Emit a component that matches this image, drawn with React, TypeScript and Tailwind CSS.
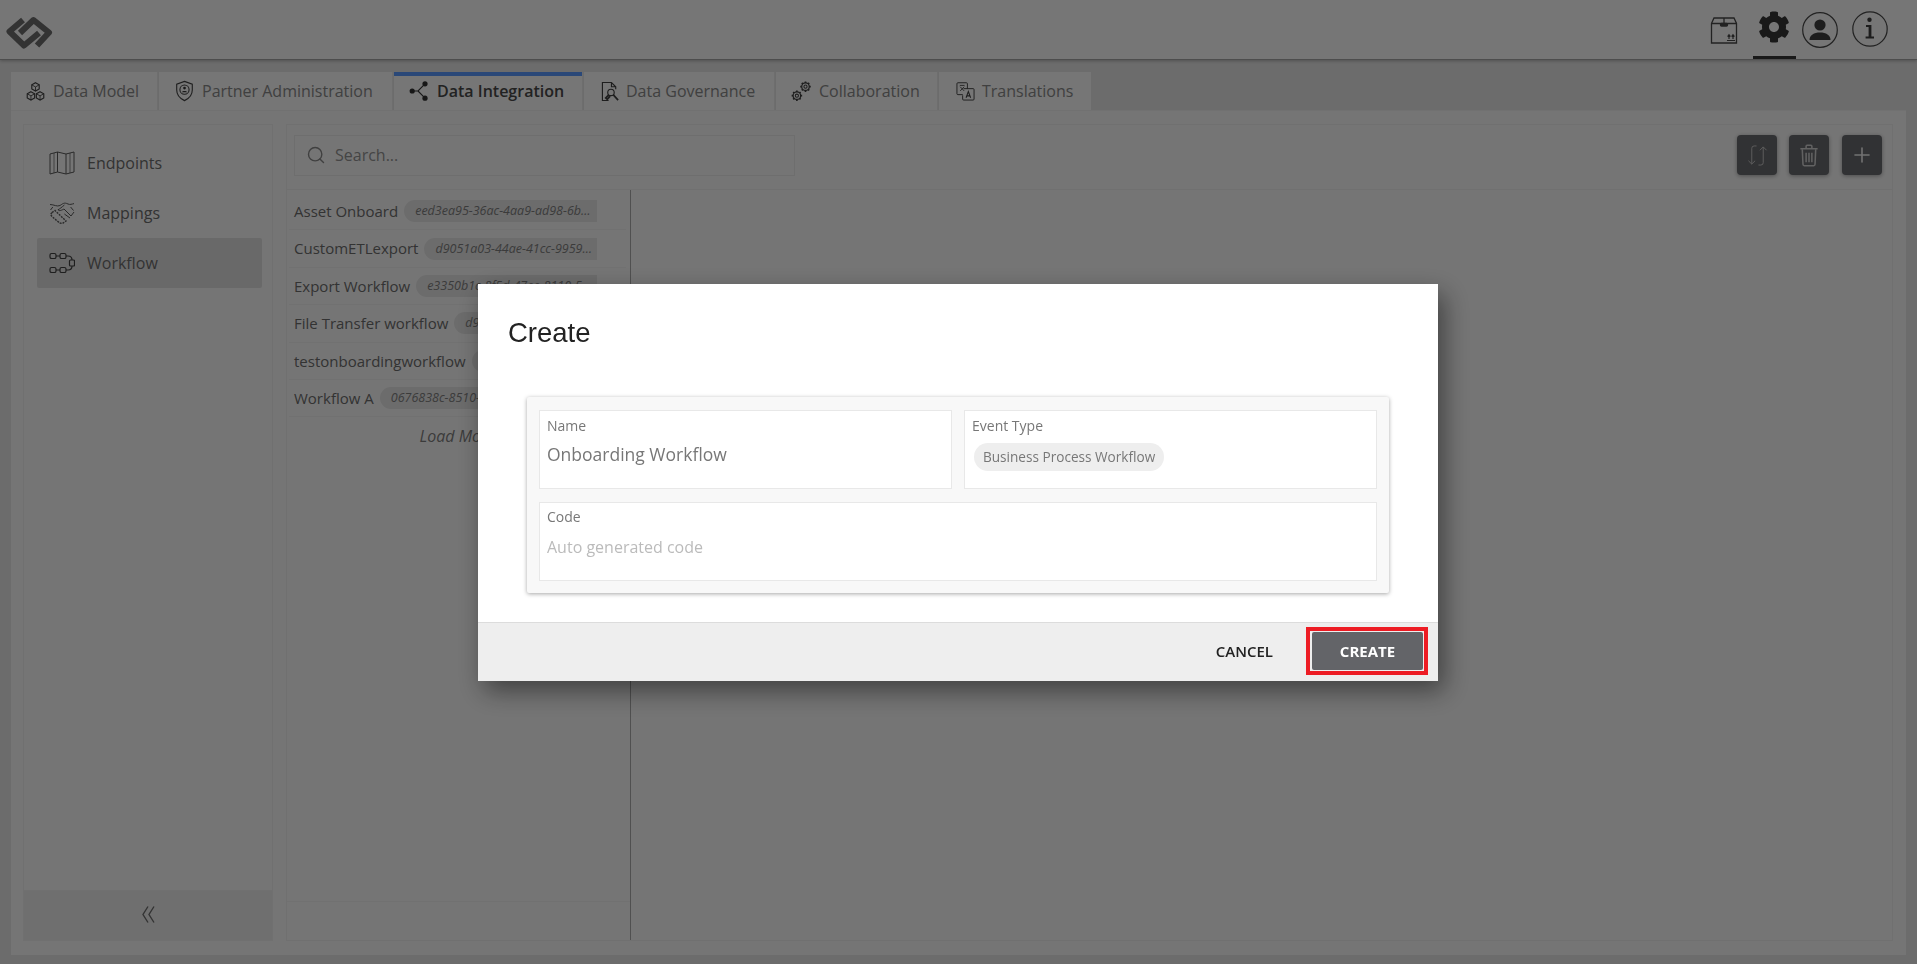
import { Plus, Search } from "lucide-react";
import { FaCog } from "react-icons/fa";

const workflows = [
  { name: "Asset Onboard", code: "eed3ea95-36ac-4aa9-ad98-6b41c07de2f1" },
  { name: "CustomETLexport", code: "d9051a03-44ae-41cc-9959-1f0ab27c6d31" },
  { name: "Export Workflow", code: "e3350b1c-8f5d-47ee-8110-5ab2c9d1f044" },
  { name: "File Transfer workflow", code: "d94c17e2-6b3a-4f10-a7d2-90be13c4d5a7" },
  { name: "testonboardingworkflow", code: "a17f03d6-92cb-4e85-b1a0-7c6de4f2b918" },
  { name: "Workflow A", code: "0676838c-8510-4d2e-9c3b-e1f7a05b6c42" },
];

function Logo() {
  return (
    <svg viewBox="0 0 60 45" className="-ml-[6px] h-[45px] w-[60px]" fill="none" stroke="#666" strokeWidth="6" strokeLinejoin="round" strokeLinecap="butt">
      <path d="M23 13 L9.5 24.5 L24 38.5 L39 26" />
      <path d="M20 26 L33.5 13 L49 25.5 L37 38.5" />
    </svg>
  );
}

function BoxIcon() {
  return (
    <svg viewBox="0 0 28 28" className="h-[28px] w-[28px]" fill="none" stroke="#444" strokeWidth="1.3">
      <path d="M1.5 7.5 L4 2 H24 L26.5 7.5 V27 H1.5 Z" />
      <path d="M1.5 7.5 H26.5 M14 2 V7.5" />
      <rect x="10.5" y="7.5" width="7" height="2.6" rx="1" fill="#444" />
      <path d="M17 24.5 H25 M19 23 V19 M23 23 V19 M17.6 20.6 L19 18.8 L20.4 20.6 M21.6 20.6 L23 18.8 L24.4 20.6" strokeWidth="1.2" />
    </svg>
  );
}

function UserCircle() {
  return (
    <svg viewBox="0 0 36 36" className="h-[36px] w-[36px]" fill="none">
      <circle cx="18" cy="18" r="17.3" stroke="#444" strokeWidth="1.2" />
      <circle cx="18" cy="13" r="5.6" fill="#3a3a3a" />
      <path d="M7.5 28 C7.5 23 12 20.5 18 20.5 C24 20.5 28.5 23 28.5 28 Z" fill="#3a3a3a" />
    </svg>
  );
}

function InfoCircle() {
  return (
    <svg viewBox="0 0 36 36" className="-mt-[2px] h-[36px] w-[36px]" fill="none">
      <circle cx="18" cy="18" r="17.2" stroke="#444" strokeWidth="1.2" />
      <circle cx="17.5" cy="8.8" r="2.2" fill="#3a3a3a" />
      <path d="M14 14 H19.4 V25.4 H22 V27.4 H13.6 V25.4 H16.6 V16 H14 Z" fill="#3a3a3a" />
    </svg>
  );
}

function Cube({ x, y }: { x: number; y: number }) {
  return (
    <g transform={`translate(${x} ${y})`}>
      <path d="M0 -4.4 L3.9 -2.2 V2.2 L0 4.4 L-3.9 2.2 V-2.2 Z" />
      <path d="M-3.9 -2.2 L0 0 L3.9 -2.2 M0 0 V4.4" strokeWidth="0.9" />
    </g>
  );
}

function DataModelIcon() {
  return (
    <svg viewBox="0 0 20 20" className="h-[19px] w-[19px]" fill="none" stroke="#3c3c3c" strokeWidth="1.2">
      <Cube x={10} y={5.2} />
      <Cube x={5.2} y={14.6} />
      <Cube x={14.8} y={14.6} />
    </svg>
  );
}

function ShieldIcon() {
  return (
    <svg viewBox="0 0 20 24" className="h-[22px] w-[19px]" fill="none" stroke="#3c3c3c" strokeWidth="1.2">
      <path d="M10 1.5 L18.5 4.5 V11 C18.5 16.5 14.5 20.5 10 22.5 C5.5 20.5 1.5 16.5 1.5 11 V4.5 Z" />
      <circle cx="10" cy="10.5" r="5" />
      <circle cx="10" cy="8.8" r="1.5" fill="#333" stroke="none" />
      <path d="M7.2 13.4 C7.5 11.5 12.5 11.5 12.8 13.4 Z" fill="#333" stroke="none" />
    </svg>
  );
}

function ShareIcon() {
  return (
    <svg viewBox="0 0 20 20" className="h-[20px] w-[20px]" fill="#2e2e2e" stroke="#2e2e2e">
      <circle cx="3.2" cy="10" r="2.6" stroke="none" />
      <circle cx="16" cy="2.8" r="2.6" stroke="none" />
      <circle cx="16" cy="17.2" r="2.6" stroke="none" />
      <path d="M3.2 10 H9 L16 2.8 M9 10 L16 17.2" fill="none" strokeWidth="1.1" />
    </svg>
  );
}

function GovernanceIcon() {
  return (
    <svg viewBox="0 0 20 22" className="h-[21px] w-[19px]" fill="none" stroke="#3c3c3c" strokeWidth="1.2">
      <path d="M8 20.5 H1.5 V1.5 H11 L15.5 6 V8.5 M11 1.5 V6 H15.5" />
      <circle cx="10.5" cy="12" r="3.4" />
      <path d="M8.2 14.6 L5 17.8 L6.6 19.2 L9.6 15.8 M13 14.6 L18 20" strokeWidth="1.8" />
    </svg>
  );
}

function GearGlyph({ cx, cy, r }: { cx: number; cy: number; r: number }) {
  const teeth = [0, 45, 90, 135];
  return (
    <g>
      <circle cx={cx} cy={cy} r={r} strokeWidth="1.2" />
      <circle cx={cx} cy={cy} r={r * 0.42} strokeWidth="1" />
      {teeth.map((a) => (
        <path key={a} d={`M${cx} ${cy - r - 1.4} V${cy - r} M${cx} ${cy + r} V${cy + r + 1.4}`} strokeWidth="1.6" transform={`rotate(${a} ${cx} ${cy})`} />
      ))}
    </g>
  );
}

function CollabIcon() {
  return (
    <svg viewBox="0 0 20 20" className="h-[21px] w-[21px]" fill="none" stroke="#3c3c3c">
      <GearGlyph cx={5.6} cy={14} r={3.6} />
      <GearGlyph cx={13.8} cy={5.4} r={3.6} />
    </svg>
  );
}

function TranslateIcon() {
  return (
    <svg viewBox="0 0 20 20" className="h-[19px] w-[19px]" fill="none" stroke="#3c3c3c" strokeWidth="1">
      <rect x="1" y="0.8" width="11" height="12.5" rx="1" />
      <path d="M8 7 H18 Q19 7 19 8 V18 Q19 19 18 19 H8 Q7 19 7 18 V14" fill="#ececec" />
      <path d="M4 3.6 H9 M4.4 5 L8.6 9.4 M8.6 5 L4.4 9.4" strokeWidth="0.9" />
      <path d="M10.6 16.6 L13 10 L15.4 16.6 M11.4 14.6 H14.6" strokeWidth="1.1" />
    </svg>
  );
}

function EndpointsIcon() {
  return (
    <svg viewBox="0 0 26 24" className="h-[24px] w-[26px]" fill="none" stroke="#555" strokeWidth="1">
      <path d="M1 3 L8.5 1 L17 3 L25 1 V21 L17 23 L8.5 21 L1 23 Z" />
      <path d="M8.5 1 V21 M17 3 V23" />
      <path d="M5 2 V22 M21 2 V22" strokeWidth="0.7" />
    </svg>
  );
}

function MappingsIcon() {
  return (
    <svg viewBox="0 0 26 24" className="h-[24px] w-[26px]" fill="none" stroke="#555" strokeWidth="1">
      <path d="M1 3.5 C5 3.5 8 6 11 4.5 C13.5 3 15 1 19 3 C21 4 23 3 25 2.6" />
      <path d="M1.5 9 L3.8 6 M24.5 9.5 L21.6 6 M15.4 4 C13 6 10.6 8 9 8.8 C10.2 10.6 13 9 15 8 L22 15" />
      <path d="M3 11.5 L6 9.5 L17 20 L13.5 22.5 L10.6 22 L3 15.5 L1.5 13.5 Z" strokeDasharray="2 1" strokeWidth="1.4" />
      <path d="M22 15 L25 11 M21 17 L15.4 13" />
    </svg>
  );
}

function WorkflowIcon() {
  return (
    <svg viewBox="0 0 26 22" className="h-[22px] w-[26px]" fill="none" stroke="#3c3c3c" strokeWidth="1.2">
      <rect x="1" y="1.5" width="6" height="5" rx="1.6" />
      <rect x="11" y="1.5" width="6" height="5" rx="1.6" />
      <rect x="1" y="15.5" width="6" height="5" rx="1.6" />
      <rect x="11" y="15.5" width="6" height="5" rx="1.6" />
      <rect x="20.5" y="8" width="5" height="6" rx="1" />
      <path d="M7 4 H11 M7 18 H11 M17 4 H19 Q23 4 23 8 M17 18 H19 Q23 18 23 14" />
    </svg>
  );
}

function SwapIcon() {
  return (
    <svg viewBox="0 0 22 22" className="h-[21px] w-[21px]" fill="none" stroke="#bcbcbc" strokeWidth="1">
      <path d="M10 1 H7.5 Q5 1 5 3.5 V20 M1.5 16.5 L5 20 L8.5 16.5" />
      <path d="M12 21 H14.5 Q17 21 17 18.5 V2 M13.5 5.5 L17 2 L20.5 5.5" />
    </svg>
  );
}

function TrashIcon() {
  return (
    <svg viewBox="0 0 20 24" className="h-[23px] w-[20px]" fill="none" stroke="#c4c4c4" strokeWidth="1.6">
      <path d="M1 5 H19 M7 4.6 V2.4 Q7 1.4 8 1.4 H12 Q13 1.4 13 2.4 V4.6" />
      <path d="M3 5.4 L3.7 21.2 Q3.8 22.6 5 22.6 H15 Q16.2 22.6 16.3 21.2 L17 5.4" />
      <path d="M7 9 V19 M10 9 V19 M13 9 V19" />
    </svg>
  );
}

function Tab({ icon, label, active, className }: { icon: React.ReactNode; label: string; active?: boolean; className: string }) {
  return (
    <div
      className={`flex h-[38px] shrink-0 items-center border-r border-[#dcdcdc] bg-[#ececec] text-[16px] ${
        active ? "font-semibold text-[#444] shadow-[inset_0_4px_0_#5490f0]" : "text-[#808080]"
      } ${className}`}
    >
      {icon}
      {label}
    </div>
  );
}

function SideItem({ icon, label, active }: { icon: React.ReactNode; label: string; active?: boolean }) {
  return (
    <div className={`flex h-[50px] items-center gap-[12px] rounded-[2px] px-[12px] text-[16px] text-[#666] ${active ? "bg-[#d3d3d3]" : ""}`}>
      <span className="flex w-[26px] justify-center">{icon}</span>
      {label}
    </div>
  );
}

function ToolButton({ children, className = "" }: { children: React.ReactNode; className?: string }) {
  return (
    <button className={`flex h-[40px] w-[40px] items-center justify-center rounded-[4px] bg-[#636468] shadow-[0_1px_4px_rgba(0,0,0,0.35)] ${className}`}>
      {children}
    </button>
  );
}

function Field({ label, children, className = "" }: { label: string; children: React.ReactNode; className?: string }) {
  return (
    <div className={`h-[79px] border border-[#e8e8e8] bg-white px-[7px] ${className}`}>
      <div className="text-[14px] leading-[20px] text-[#777]">{label}</div>
      {children}
    </div>
  );
}

export default function App() {
  return (
    <div className="flex h-[964px] flex-col overflow-hidden bg-[#d8d8d8] font-['Open_Sans',sans-serif]">
      <header className="flex h-[60px] shrink-0 items-center border-b border-[#9a9a9a] bg-[#ececec] pr-[29px] pl-[6px] shadow-[0_1px_3px_rgba(0,0,0,0.25)]">
        <Logo />
        <div className="ml-auto flex h-full items-center">
          <BoxIcon />
          <div className="ml-[15px] flex h-full w-[43px] items-center justify-center border-b-[3px] border-[#333] pr-[1px] pb-[2px]">
            <FaCog className="text-[32px] text-[#333]" />
          </div>
          <div className="ml-[6px] flex"><UserCircle /></div>
          <div className="ml-[14px] flex"><InfoCircle /></div>
        </div>
      </header>

      <main className="flex min-h-0 flex-1 flex-col pt-[12px] pr-[11px] pb-[9px] pl-[11px]">
        <nav className="flex h-[38px] shrink-0 items-start gap-[1px]">
          <Tab className="w-[147px] gap-[8px] pl-[15px]" icon={<DataModelIcon />} label="Data Model" />
          <Tab className="w-[234px] gap-[8px] pl-[16px]" icon={<ShieldIcon />} label="Partner Administration" />
          <Tab className="w-[189px] gap-[8px] pl-[15px]" active icon={<ShareIcon />} label="Data Integration" />
          <Tab className="w-[191px] gap-[6px] pl-[17px]" icon={<GovernanceIcon />} label="Data Governance" />
          <Tab className="w-[162px] gap-[7px] pl-[15px]" icon={<CollabIcon />} label="Collaboration" />
          <Tab className="w-[152px] gap-[7px] border-r-0 pl-[17px]" icon={<TranslateIcon />} label="Translations" />
        </nav>

        <section className="flex min-h-0 flex-1 gap-[13px] border-t border-[#e2e2e2] bg-[#ebebeb] pt-[13px] pr-[13px] pb-[14px] pl-[12px]">
          <aside className="flex w-[250px] shrink-0 flex-col border border-[#e0e0e0]">
            <div className="flex-1 pt-[13px] pr-[10px] pl-[13px]">
              <SideItem icon={<EndpointsIcon />} label="Endpoints" />
              <SideItem icon={<MappingsIcon />} label="Mappings" />
              <SideItem icon={<WorkflowIcon />} label="Workflow" active />
            </div>
            <div className="flex h-[50px] items-center justify-center border-t border-[#e0e0e0] bg-[#dedede] pb-[2px]">
              <svg viewBox="0 0 13 17" className="h-[17px] w-[13px]" fill="none" stroke="#666" strokeWidth="1.4">
                <path d="M6 0.5 L1 8.5 L6 16.5 M12 0.5 L7 8.5 L12 16.5" />
              </svg>
            </div>
          </aside>

          <div className="flex min-w-0 flex-1 flex-col border border-[#e0e0e0]">
            <div className="flex h-[65px] shrink-0 items-center justify-between border-b border-[#e0e0e0] pr-[10px] pb-[4px] pl-[7px]">
              <div className="flex h-[41px] w-[501px] items-center gap-[9px] border border-[#dcdcdc] px-[11px] text-[16px] text-[#8a8a8a]">
                <Search size={20} strokeWidth={1.7} className="text-[#808080]" />
                Search...
              </div>
              <div className="flex items-center gap-[12px]">
                <ToolButton><SwapIcon /></ToolButton>
                <ToolButton><TrashIcon /></ToolButton>
                <ToolButton className="ml-[1px]"><Plus size={24} strokeWidth={1.6} className="text-[#e4e4e4]" /></ToolButton>
              </div>
            </div>

            <div className="flex min-h-0 flex-1">
              <div className="flex w-[344px] shrink-0 flex-col border-r border-[#a0a0a0]">
                <div className="flex-1 pt-[3px] pr-[4px] pl-[2px]">
                  {workflows.map((w) => (
                    <div key={w.name} className="flex h-[37.4px] items-center gap-[6px] border-b border-[#e2e2e2] pr-[29px] pl-[5px]">
                      <span className="shrink-0 text-[15px] text-[#666]">{w.name}</span>
                      <span className="h-[22px] min-w-0 flex-1 truncate rounded-l-full bg-[#d8d8d8] pr-[4px] pl-[11px] text-[12.5px] leading-[22px] text-[#777] italic">
                        {w.code}
                      </span>
                    </div>
                  ))}
                  <div className="pt-[7px] text-center text-[16px] text-[#777] italic">Load More</div>
                </div>
                <div className="h-[39px] shrink-0 border-t border-[#e2e2e2]" />
              </div>
            </div>
          </div>
        </section>
      </main>

      <div className="fixed inset-0 flex items-center justify-center bg-black/50 pr-[1px]">
        <div className="flex h-[397px] w-[960px] flex-col bg-white shadow-[6px_10px_24px_rgba(0,0,0,0.45)]">
          <div className="flex-1 px-[49px]">
            <h2 className="-ml-[19px] pt-[33px] font-['Liberation_Sans',sans-serif] text-[27.5px] leading-[32px] text-[#222]">Create</h2>
            <div className="mt-[48px] grid grid-cols-2 gap-x-[12px] gap-y-[13px] rounded-[2px] bg-[#f8f8f8] px-[12px] pt-[13px] pb-[12px] shadow-[0_1px_4px_rgba(0,0,0,0.35)]">
              <Field label="Name" className="pt-[5px]">
                <div className="mt-[5px] text-[17.5px] leading-[26px] text-[#777]">Onboarding Workflow</div>
              </Field>
              <Field label="Event Type" className="pt-[5px]">
                <span className="mt-[7px] ml-[2px] inline-block h-[28px] rounded-full bg-[#eeeeee] px-[9px] text-[13.6px] leading-[28px] text-[#777]">
                  Business Process Workflow
                </span>
              </Field>
              <Field label="Code" className="col-span-2 pt-[4px]">
                <div className="mt-[8px] text-[16px] leading-[24px] text-[#bbb]">Auto generated code</div>
              </Field>
            </div>
          </div>
          <div className="flex h-[59px] shrink-0 items-center justify-end border-t border-[#dcdcdc] bg-[#eeeeee] pr-[10px]">
            <button className="mr-[33px] text-[15px] font-semibold text-[#222]">CANCEL</button>
            <div className="mb-[1px] flex border-4 border-[#ed1c24] pt-[1px] pr-[1px] pb-[1px] pl-[2px]">
              <button className="h-[38px] w-[111px] rounded-[2px] bg-[#636468] text-[15px] font-bold text-white">CREATE</button>
            </div>
          </div>
        </div>
      </div>
    </div>
  );
}
